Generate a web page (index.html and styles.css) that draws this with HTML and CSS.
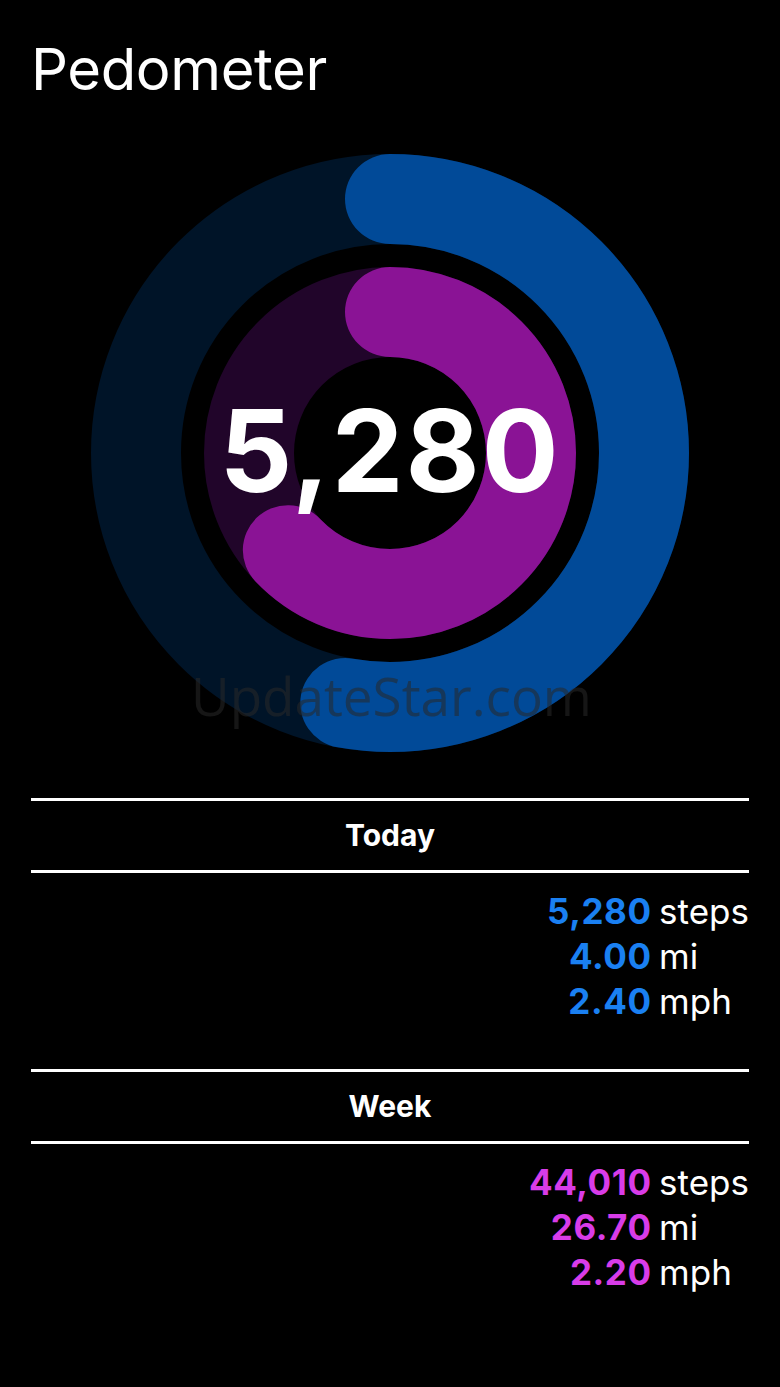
FILE: index.html
```html
<!DOCTYPE html>
<html lang="en">
<head>
    <meta charset="UTF-8">
    <meta name="viewport" content="width=device-width, initial-scale=1.0">
    <title>Pedometer</title>
    <link rel="stylesheet" href="styles.css">
</head>
<body>

    <!-- Title -->
    <h1 class="titulo">Pedometer</h1>

    <!-- Rings -->
    <div class="anillos">
        <svg class="anillos-svg" width="600" height="600" viewBox="0 0 600 600">
            <g transform="rotate(-90 300 300)">
                <circle cx="300" cy="300" r="254" class="pista-azul"/>
                <circle cx="300" cy="300" r="254" class="arco-azul" stroke-dasharray="842.6 2000"/>
                <circle cx="300" cy="300" r="141" class="pista-morada"/>
                <circle cx="300" cy="300" r="141" class="arco-morado" stroke-dasharray="557 2000"/>
            </g>
        </svg>
        <div class="numero">5,280</div>
        <div class="marca">UpdateStar.com</div>
    </div>

    <!-- Today -->
    <div class="seccion">
        <div class="cabecera">Today</div>
        <div class="datos azul">
            <span class="valor">5,280</span><span class="unidad">steps</span>
            <span class="valor">4.00</span><span class="unidad">mi</span>
            <span class="valor">2.40</span><span class="unidad">mph</span>
        </div>
    </div>

    <!-- Week -->
    <div class="seccion">
        <div class="cabecera">Week</div>
        <div class="datos morado">
            <span class="valor">44,010</span><span class="unidad">steps</span>
            <span class="valor">26.70</span><span class="unidad">mi</span>
            <span class="valor">2.20</span><span class="unidad">mph</span>
        </div>
    </div>

</body>
</html>
```

FILE: styles.css
```css
body { margin: 0; background: #000; color: #fff; font-family: Inter, "Liberation Sans", sans-serif; }

.titulo { margin: 0; padding: 34px 0 0 31px; font-size: 58px; font-weight: 400; line-height: 71px; letter-spacing: -0.4px; }

.anillos { position: relative; width: 600px; height: 600px; margin: 48px auto 0; }
.anillos-svg { display: block; }
.anillos-svg circle { fill: none; stroke-width: 90; }
.pista-azul { stroke: #001428; }
.arco-azul { stroke: #014a98; stroke-linecap: round; }
.pista-morada { stroke: #21052a; }
.arco-morado { stroke: #8a1395; stroke-linecap: round; }

.numero { position: absolute; left: 0; right: 0; top: 238px; text-align: center; font-size: 114px; font-weight: 700; line-height: 120px; letter-spacing: 2px; }
.marca { position: absolute; left: 101px; top: 506px; font-family: "Open Sans", sans-serif; font-size: 53px; color: rgba(40, 40, 40, 0.55); white-space: nowrap; }

.seccion { margin: 45px 31px 0; }
.cabecera { border-top: 3px solid #fff; border-bottom: 3px solid #fff; height: 69px; line-height: 69px; text-align: center; font-size: 30px; font-weight: 700; }

.datos { display: grid; grid-template-columns: auto auto; justify-content: end; column-gap: 8px; padding-top: 16px; font-size: 35px; line-height: 45px; }
.valor { justify-self: end; font-weight: 700; letter-spacing: 0.6px; margin-right: -0.6px; }
.unidad { justify-self: start; }
.azul .valor { color: #1a80f2; }
.morado .valor { color: #d83ce8; }
```
